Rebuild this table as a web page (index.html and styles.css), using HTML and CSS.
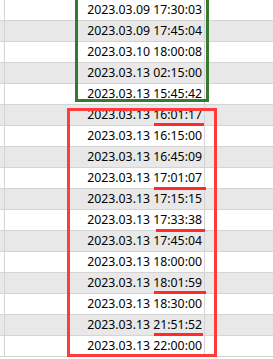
FILE: index.html
```html
<!DOCTYPE html>
<html>
<head>
<meta charset="utf-8">
<link rel="stylesheet" href="styles.css">
</head>
<body>
<div class="sheet">
  <div class="row"><div class="a"></div><div class="b">2023.03.09 17:30:03</div><div class="c"></div></div>
  <div class="row alt"><div class="a"></div><div class="b">2023.03.09 17:45:04</div><div class="c"></div></div>
  <div class="row"><div class="a"></div><div class="b">2023.03.10 18:00:08</div><div class="c"></div></div>
  <div class="row alt"><div class="a"></div><div class="b">2023.03.13 02:15:00</div><div class="c"></div></div>
  <div class="row"><div class="a"></div><div class="b">2023.03.13 15:45:42</div><div class="c"></div></div>
  <div class="row alt"><div class="a"></div><div class="b">2023.03.13 16:01:17</div><div class="c"></div></div>
  <div class="row"><div class="a"></div><div class="b">2023.03.13 16:15:00</div><div class="c"></div></div>
  <div class="row alt"><div class="a"></div><div class="b">2023.03.13 16:45:09</div><div class="c"></div></div>
  <div class="row"><div class="a"></div><div class="b">2023.03.13 17:01:07</div><div class="c"></div></div>
  <div class="row alt"><div class="a"></div><div class="b">2023.03.13 17:15:15</div><div class="c"></div></div>
  <div class="row"><div class="a"></div><div class="b">2023.03.13 17:33:38</div><div class="c"></div></div>
  <div class="row alt"><div class="a"></div><div class="b">2023.03.13 17:45:04</div><div class="c"></div></div>
  <div class="row"><div class="a"></div><div class="b">2023.03.13 18:00:00</div><div class="c"></div></div>
  <div class="row alt"><div class="a"></div><div class="b">2023.03.13 18:01:59</div><div class="c"></div></div>
  <div class="row"><div class="a"></div><div class="b">2023.03.13 18:30:00</div><div class="c"></div></div>
  <div class="row alt"><div class="a"></div><div class="b">2023.03.13 21:51:52</div><div class="c"></div></div>
  <div class="row"><div class="a"></div><div class="b">2023.03.13 22:00:00</div><div class="c"></div></div>

  <div class="box green"></div>
  <div class="box red"></div>
  <div class="mark m1"></div>
  <div class="mark m2"></div>
  <div class="mark m3"></div>
  <div class="mark m4"></div>
  <div class="mark m5"></div>
</div>
</body>
</html>
```
FILE: styles.css
```css
html, body {
  margin: 0;
  padding: 0;
  background: #ffffff;
}
body {
  width: 273px;
  height: 359px;
  overflow: hidden;
}
.sheet {
  position: relative;
  width: 273px;
  height: 359px;
  font-family: "Noto Sans", "Liberation Sans", sans-serif;
  font-size: 12.3px;
  color: #000;
}
.row {
  display: flex;
  height: 20px;
  border-bottom: 1px solid #d4d4d4;
  background: #ffffff;
}
.row.alt {
  background: #e8e8e8;
}
.row:last-of-type {
  border-bottom: 3px solid #c8c8c8;
}
.a {
  width: 4px;
  border-right: 1px solid #d4d4d4;
}
.b {
  width: 197px;
  padding-right: 2px;
  border-right: 1px solid #d4d4d4;
  text-align: right;
  line-height: 19px;
  white-space: nowrap;
}
.c {
  flex: 1;
}
.box {
  position: absolute;
  box-sizing: border-box;
  border: 3px solid;
}
.green {
  left: 75px;
  top: -3px;
  width: 134px;
  height: 105px;
  border-color: #367a2f;
}
.red {
  left: 67px;
  top: 108px;
  width: 150px;
  height: 249px;
  border-color: #ff3b3b;
}
.mark {
  position: absolute;
  height: 3px;
  background: #ff2b2b;
}
.m1 { left: 154px; top: 123px; width: 50px; }
.m2 { left: 154px; top: 187px; width: 52px; }
.m3 { left: 156px; top: 229px; width: 49px; }
.m4 { left: 154px; top: 291px; width: 52px; }
.m5 { left: 154px; top: 333px; width: 49px; }
```
